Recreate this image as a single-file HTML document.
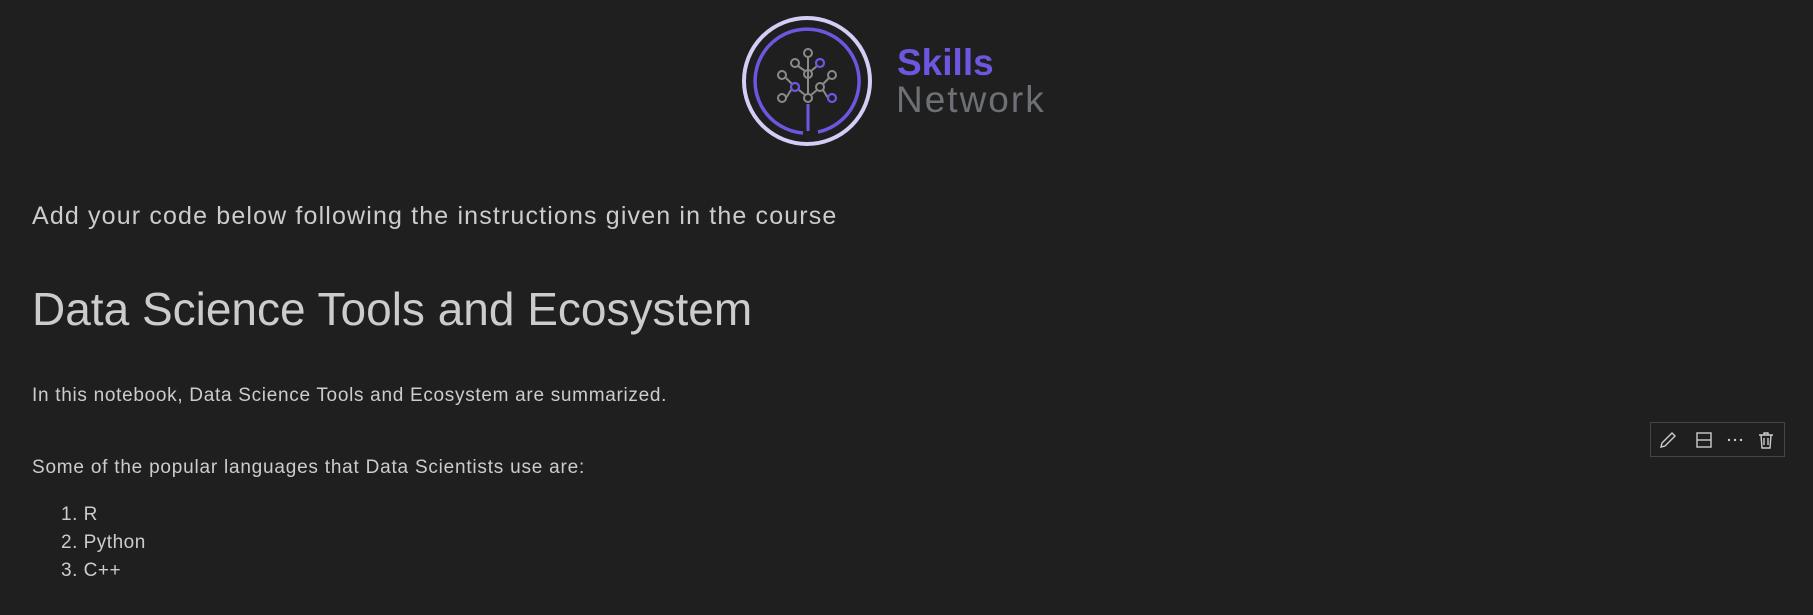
<!DOCTYPE html>
<html><head><style>
html,body{margin:0;padding:0;background:#1f1f1f;width:1813px;height:615px;overflow:hidden;font-family:"Liberation Sans",sans-serif;color:#cccccc}
.t{position:absolute;white-space:nowrap;left:32px}
</style></head><body>
<svg width="1813" height="615" style="position:absolute;left:0;top:0">
<circle cx="807" cy="81" r="63" fill="none" stroke="#d5cdf5" stroke-width="4"/>
<path d="M803 133 A52 52 0 1 1 818 132" fill="none" stroke="#6e56e0" stroke-width="3.5"/>
<line x1="808" y1="104" x2="808" y2="131" stroke="#6e56e0" stroke-width="3"/>
<g stroke="#8a8a8a" stroke-width="2" fill="none">
<line x1="808" y1="57" x2="808" y2="94"/>
<line x1="798" y1="66" x2="805" y2="71"/>
<line x1="817" y1="66" x2="811" y2="71"/>
<line x1="786" y1="78" x2="792" y2="84"/>
<line x1="829" y1="78" x2="823" y2="84"/>
<line x1="799" y1="90" x2="805" y2="95"/>
<line x1="817" y1="90" x2="811" y2="95"/>
<line x1="786" y1="98" x2="791" y2="90"/>
<line x1="828" y1="98" x2="823" y2="90"/>
<circle cx="808" cy="53" r="4"/><circle cx="795" cy="63" r="4"/><circle cx="808" cy="74" r="4"/>
<circle cx="782" cy="75" r="4"/><circle cx="832" cy="75" r="4"/><circle cx="820" cy="87" r="4"/>
<circle cx="782" cy="98" r="4"/><circle cx="808" cy="98" r="4"/>
</g>
<g stroke="#6e56e0" stroke-width="2.2" fill="none">
<circle cx="820" cy="63" r="4"/><circle cx="795" cy="87" r="4"/><circle cx="832" cy="98" r="4"/>
</g>
<text x="897" y="75" font-family="Liberation Sans" font-weight="bold" font-size="37" fill="#6e56e0">Skills</text>
<text x="896" y="112" font-family="Liberation Sans" font-size="37" letter-spacing="2" fill="#6d7175">Network</text>
<rect x="1650.5" y="422.5" width="134" height="34" fill="none" stroke="#454545"/>
<g stroke="#cccccc" stroke-width="1.4" fill="none">
<path d="M1661 447 L1662 443 L1672 433 L1675 436 L1665 446 Z"/>
<rect x="1697" y="433" width="14" height="14"/><line x1="1697" y1="440" x2="1711" y2="440"/>
<path d="M1759 435 H1773 M1764 435 V433 H1768 V435 M1761 435 L1762 448 H1770 L1771 435 M1764 438 V445 M1768 438 V445"/>
</g>
<g fill="#cccccc"><circle cx="1729" cy="440" r="1.2"/><circle cx="1735" cy="440" r="1.2"/><circle cx="1741" cy="440" r="1.2"/></g>
</svg>
<div class="t" style="top:202px;font-size:25px;letter-spacing:1.15px">Add your code below following the instructions given in the course</div>
<div class="t" style="top:282px;font-size:46px">Data Science Tools and Ecosystem</div>
<div class="t" style="top:385px;font-size:19px;letter-spacing:0.7px">In this notebook, Data Science Tools and Ecosystem are summarized.</div>
<div class="t" style="top:457px;font-size:19px;letter-spacing:0.78px">Some of the popular languages that Data Scientists use are:</div>
<div class="t" style="top:504px;left:61px;font-size:19px;letter-spacing:0.5px">1. R</div>
<div class="t" style="top:532px;left:61px;font-size:19px;letter-spacing:0.5px">2. Python</div>
<div class="t" style="top:560px;left:61px;font-size:19px;letter-spacing:0.5px">3. C++</div>
</body></html>
